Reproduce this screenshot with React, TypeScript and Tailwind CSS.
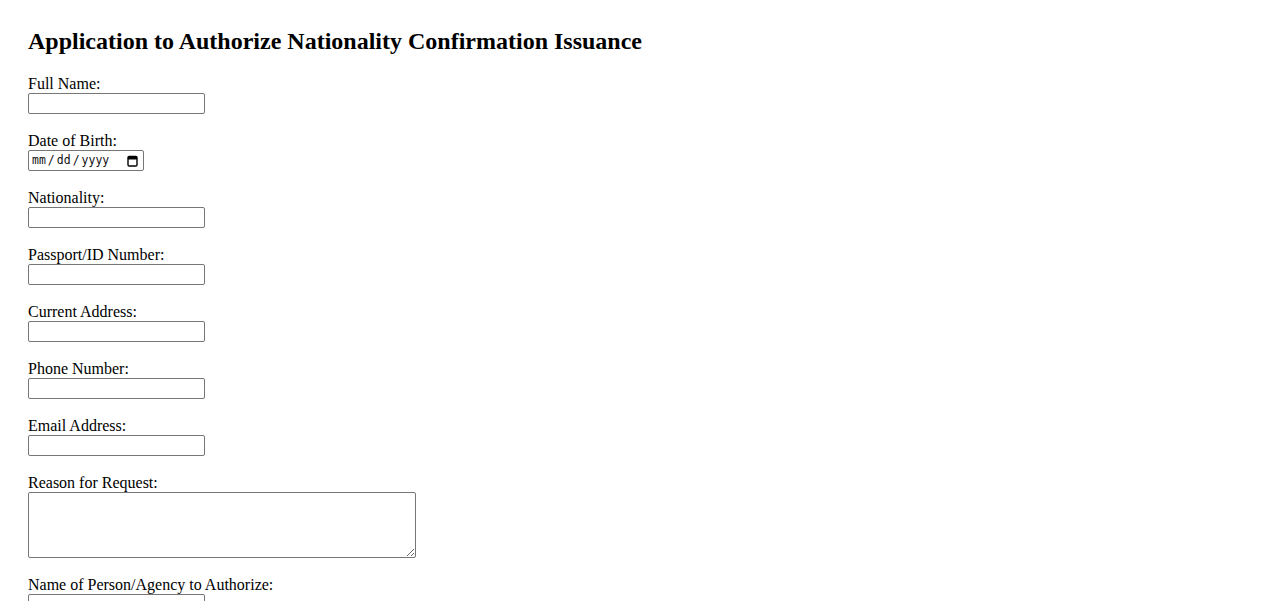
import React from "react";

const fields: { label: string; type: string }[] = [
  { label: "Full Name:", type: "text" },
  { label: "Date of Birth:", type: "date" },
  { label: "Nationality:", type: "text" },
  { label: "Passport/ID Number:", type: "text" },
  { label: "Current Address:", type: "text" },
  { label: "Phone Number:", type: "tel" },
  { label: "Email Address:", type: "email" },
];

function DateField() {
  return (
    <div className="w-[116px] h-[21px] border border-[#767676] rounded-[2px] bg-white flex items-center pl-[3px] pr-[5px] text-[11.5px] font-['DejaVu_Sans_Mono',monospace] text-[#111]">
      <div className="flex items-center gap-[2px] leading-none">
        <span>mm</span>
        <span>/</span>
        <span>dd</span>
        <span>/</span>
        <span>yyyy</span>
      </div>
      <svg className="ml-auto" width="11" height="12" viewBox="0 0 11 12">
        <rect x="1" y="1.5" width="9" height="9.5" rx="1.2" fill="none" stroke="#000" strokeWidth="1.4" />
        <rect x="1" y="1.5" width="9" height="3" fill="#000" />
      </svg>
    </div>
  );
}

const inputCls =
  "w-[177px] h-[21px] border border-[#767676] rounded-[2px] bg-white px-[2px] text-[13.33px] font-['Liberation_Sans',sans-serif]";

export default function App() {
  return (
    <div className="bg-white text-black font-['Liberation_Serif','Times_New_Roman',serif] pl-[28px] pt-[28px] pb-[28px] min-h-screen">
      <h2 className="text-[24px] font-bold leading-[27.6px] mb-[19.5px]">
        Application to Authorize Nationality Confirmation Issuance
      </h2>
      <form className="flex flex-col items-start">
        {fields.map((f) => (
          <div key={f.label} className="flex flex-col items-start mb-[18px]">
            <label className="text-[16px] leading-[18px]">{f.label}</label>
            {f.type === "date" ? <DateField /> : <input type={f.type} className={inputCls} />}
          </div>
        ))}
        <div className="flex flex-col items-start mb-[18px]">
          <label className="text-[16px] leading-[18px]">Reason for Request:</label>
          <textarea className="w-[388px] h-[66px] border border-[#767676] rounded-[2px] bg-white px-[2px] text-[13.33px] font-['DejaVu_Sans_Mono',monospace] resize" />
        </div>
        <div className="flex flex-col items-start mb-[18px]">
          <label className="text-[16px] leading-[18px]">Name of Person/Agency to Authorize:</label>
          <input type="text" className={inputCls} />
        </div>
        <div className="flex flex-col items-start mb-[18px]">
          <label className="text-[16px] leading-[18px]">Relationship to Applicant:</label>
          <input type="text" className={inputCls} />
        </div>
        <button
          type="submit"
          className="border border-[#767676] rounded-[2px] bg-[#efefef] px-[6px] py-[1px] text-[13.33px] font-['Liberation_Sans',sans-serif]"
        >
          Submit Application
        </button>
      </form>
    </div>
  );
}
